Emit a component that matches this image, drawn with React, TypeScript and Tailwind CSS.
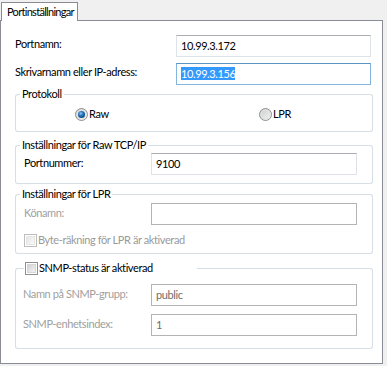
import React from "react";

const line = "border-[#d5dfe5]";

function Radio({ checked }: { checked?: boolean }) {
  return (
    <svg width="13" height="13" viewBox="0 0 13 13" className="shrink-0">
      <defs>
        <linearGradient id="radioFill" x1="0" y1="0" x2="1" y2="1">
          <stop offset="0" stopColor="#c9cacb" />
          <stop offset="1" stopColor="#f6f6f6" />
        </linearGradient>
        <radialGradient id="radioDot" cx="0.4" cy="0.35" r="0.7">
          <stop offset="0" stopColor="#8fcaf4" />
          <stop offset="0.45" stopColor="#2a76c0" />
          <stop offset="1" stopColor="#0c3f72" />
        </radialGradient>
      </defs>
      <circle cx="6.5" cy="6.5" r="6" fill="url(#radioFill)" stroke="#8f9091" />
      <circle cx="6.5" cy="6.5" r="4.5" fill="none" stroke="#e4e4e4" strokeWidth="1" />
      {checked && <circle cx="6.5" cy="6.5" r="3.5" fill="url(#radioDot)" />}
    </svg>
  );
}

function Check({ disabled }: { disabled?: boolean }) {
  const edge = disabled ? "#bdbdbd" : "#8f8f8f";
  const id = disabled ? "chkOff" : "chkOn";
  return (
    <svg width="13" height="13" viewBox="0 0 13 13" className="shrink-0">
      <defs>
        <linearGradient id={id} x1="0" y1="0" x2="1" y2="1">
          <stop offset="0" stopColor={disabled ? "#e3e3e3" : "#cfcfcf"} />
          <stop offset="1" stopColor={disabled ? "#fbfbfb" : "#f7f7f7"} />
        </linearGradient>
      </defs>
      <rect x="0.5" y="0.5" width="12" height="12" fill="#fff" stroke={edge} />
      <rect x="2.5" y="2.5" width="8" height="8" fill={`url(#${id})`} stroke={disabled ? "#e6e6e6" : "#d6d6d6"} />
    </svg>
  );
}

function Field({
  value,
  wide,
  state = "normal",
  grey,
}: {
  value?: string;
  wide?: boolean;
  state?: "normal" | "focus" | "disabled";
  grey?: boolean;
}) {
  const border =
    state === "focus"
      ? "border-[#84b5de] border-t-[#5a95c4]"
      : state === "disabled"
        ? "border-[#b4b4b4]"
        : "border-[#dfe3e8] border-t-[#abadb3]";
  return (
    <div
      className={`h-[22px] shrink-0 border bg-white pl-[4px] pt-[2px] ${wide ? "w-[195px]" : "w-[206px]"} ${border} ${
        grey ? "text-[#6d6d6d]" : "text-black"
      }`}
    >
      {state === "focus" ? <span className="bg-[#3399ff] text-white">{value}</span> : value}
    </div>
  );
}

function Group({
  title,
  lead = "w-[5px]",
  titleClass = "px-[2px]",
  className = "",
  bodyClass = "",
  children,
}: {
  title: React.ReactNode;
  lead?: string;
  titleClass?: string;
  className?: string;
  bodyClass?: string;
  children: React.ReactNode;
}) {
  return (
    <div className={`w-[358px] ${className}`}>
      <div className="flex h-[16px]">
        <div className={`mt-[8px] shrink-0 rounded-tl-[3px] border-l border-t ${line} ${lead}`} />
        <div className={`shrink-0 ${titleClass}`}>{title}</div>
        <div className={`mt-[8px] flex-1 rounded-tr-[3px] border-r border-t ${line}`} />
      </div>
      <div className={`rounded-b-[3px] border border-t-0 ${line} ${bodyClass}`}>{children}</div>
    </div>
  );
}

export default function App() {
  return (
    <div className="h-[366px] w-[387px] bg-[#f0f0f0] font-['Lato','Liberation_Sans',sans-serif] text-[11px] leading-[16px] tracking-[-0.4px] text-black">
      <div className="flex pl-[1px] pt-[2px]">
        <div className="relative z-10 h-[19px] w-[77px] border border-b-0 border-[#898c95] bg-white pl-[5px] pt-[1px] tracking-[-0.7px]">
          Portinställningar
        </div>
      </div>

      <div className="-mt-px h-[344px] w-[383px] border border-[#898c95] bg-white pl-[14px] pt-[14px]">
        <div className="flex">
          <span className="w-[161px] pt-[1px]">Portnamn:</span>
          <Field wide value="10.99.3.172" />
        </div>
        <div className="mt-[6px] flex">
          <span className="w-[161px] pt-[1px]">Skrivarnamn eller IP-adress:</span>
          <Field wide state="focus" value="10.99.3.156" />
        </div>

        <Group title="Protokoll" className="mt-[1px]" bodyClass="pb-[9px] pt-[4px]">
          <div className="flex h-[16px] items-center pl-[59px]">
            <div className="flex w-[184px] items-center gap-[1px]">
              <Radio checked />
              <span>Raw</span>
            </div>
            <div className="flex items-center gap-[1px]">
              <Radio />
              <span>LPR</span>
            </div>
          </div>
        </Group>

        <Group title="Inställningar för Raw TCP/IP" className="mt-[5px]" bodyClass="pb-[8px]">
          <div className="flex">
            <span className="w-[135px] pl-[8px] pt-[2px]">Portnummer:</span>
            <Field value="9100" />
          </div>
        </Group>

        <Group title="Inställningar för LPR" className="mt-[2px]" bodyClass="pb-[5px] pt-[1px]">
          <div className="flex">
            <span className="w-[135px] pl-[8px] pt-[2px] text-[#a0a0a0]">Könamn:</span>
            <Field state="disabled" />
          </div>
          <div className="mt-[7px] flex h-[16px] items-center pl-[8px] text-[#9a9a9a]">
            <Check disabled />
            <span className="ml-[1px]">Byte-räkning för LPR är aktiverad</span>
          </div>
        </Group>

        <Group
          className="mt-[6px]"
          lead="w-[9px]"
          titleClass="w-[173px] pl-[1px]"
          bodyClass="pb-[12px] pt-[8px]"
          title={
            <span className="flex h-[16px] items-center">
              <Check />
              <span className="ml-[1px]">SNMP-status är aktiverad</span>
            </span>
          }
        >
          <div className="flex">
            <span className="w-[135px] pl-[7px] pt-[2px] text-[#a0a0a0]">Namn på SNMP-grupp:</span>
            <Field state="disabled" grey value="public" />
          </div>
          <div className="mt-[8px] flex">
            <span className="w-[135px] pl-[7px] pt-[2px] text-[#a0a0a0]">SNMP-enhetsindex:</span>
            <Field state="disabled" grey value="1" />
          </div>
        </Group>
      </div>
    </div>
  );
}
